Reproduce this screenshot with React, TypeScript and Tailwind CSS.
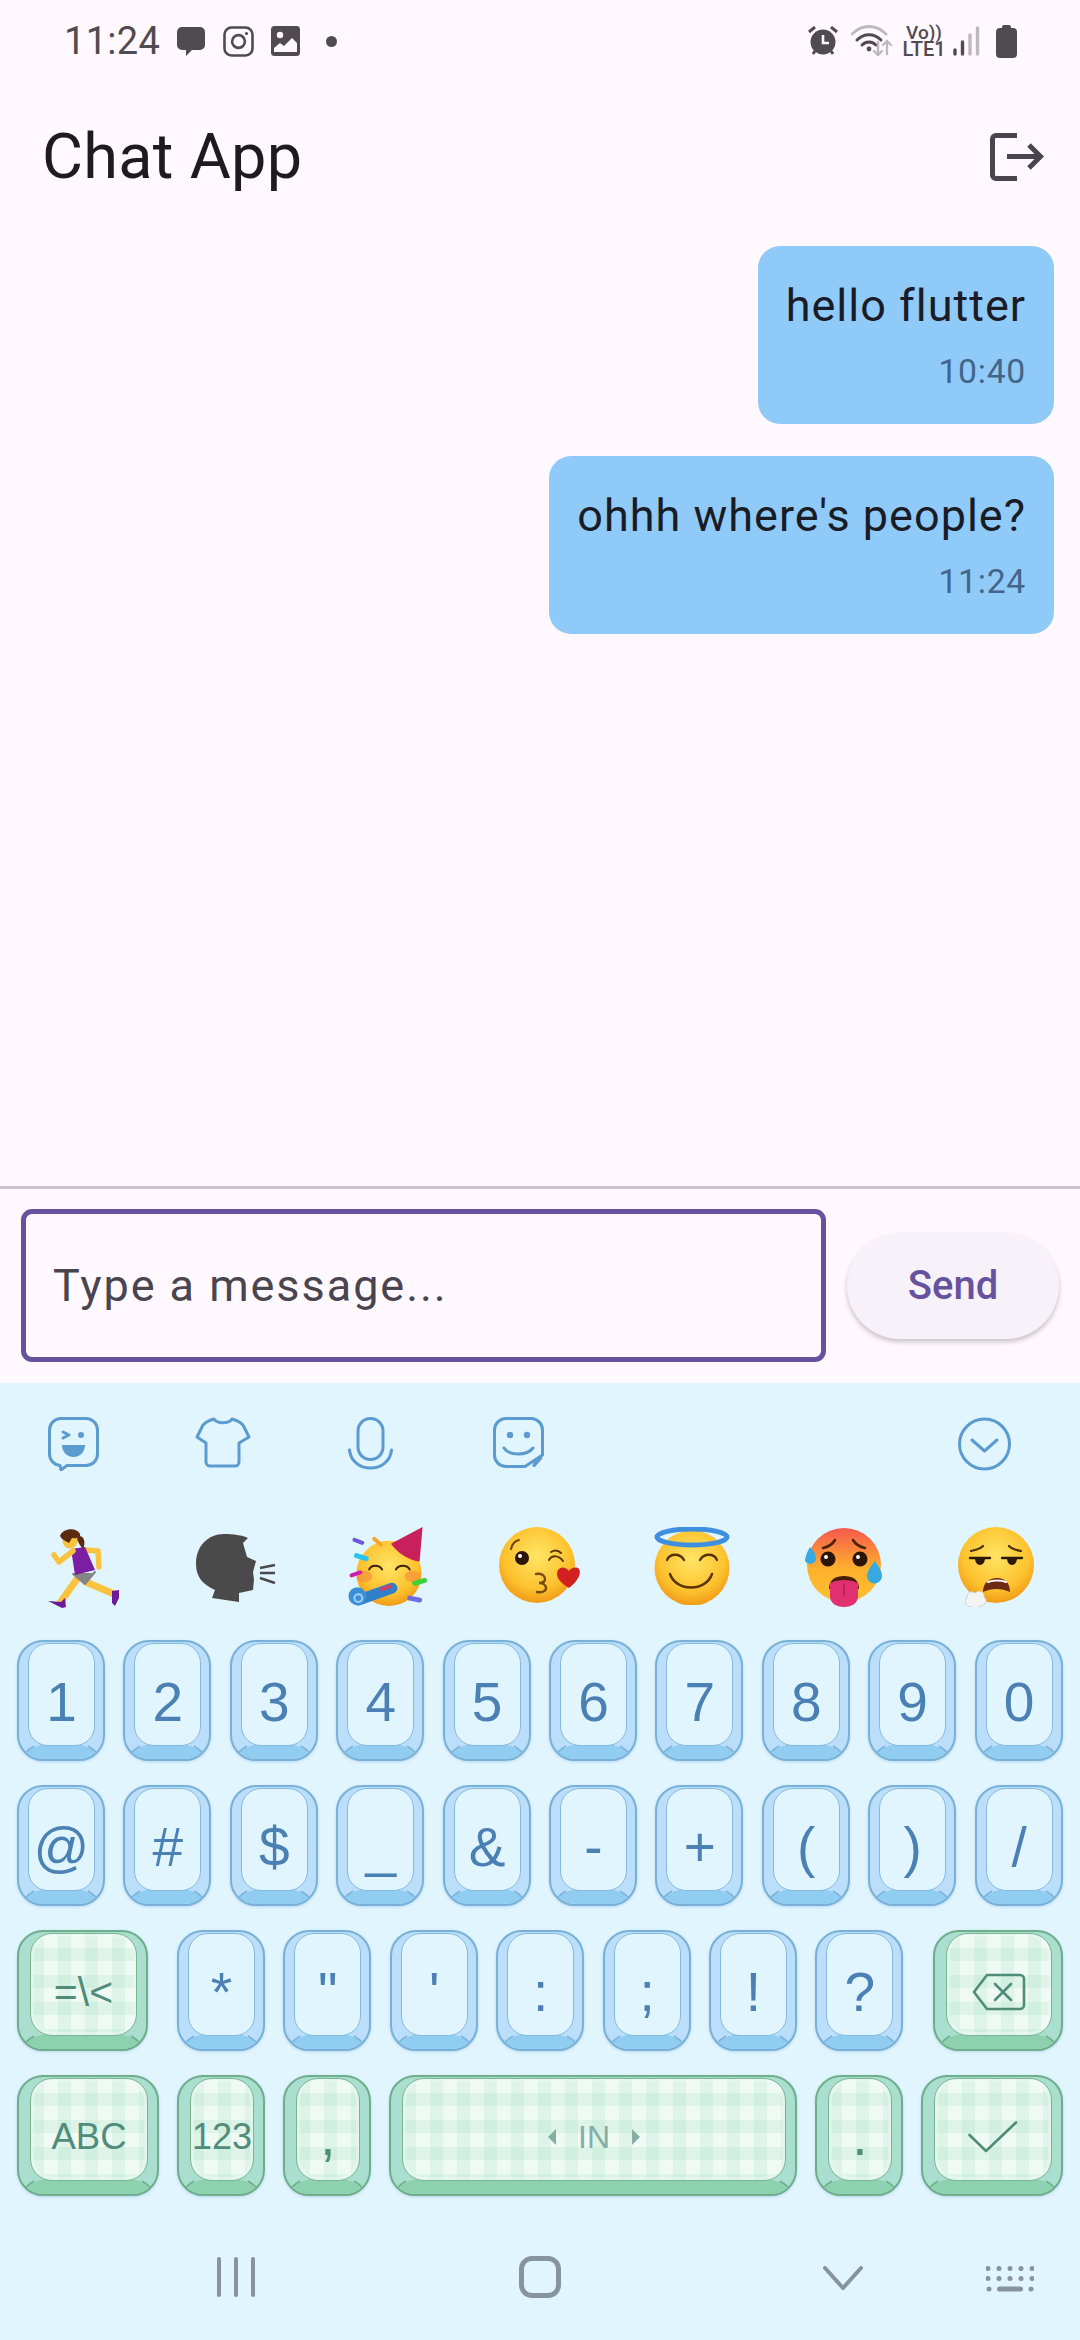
import type { ReactNode } from 'react'

const ICON = '#4f4b50'
const KB_STROKE = '#5b9bd0'
const GREEN_TEXT = '#4f8c7a'

/* ---------- status bar ---------- */

function StatusBar() {
  return (
    <div className="flex h-[82px] items-center justify-between pl-[64px] pr-[63px]">
      <div className="flex items-center">
        <span className="text-[38px] leading-[44px] tracking-[0.3px] text-[#4f4b50]">11:24</span>
        <svg viewBox="0 0 30 31" className="ml-[16px] h-[31px] w-[30px]">
          <path d="M6 1h18a5 5 0 0 1 5 5v13a5 5 0 0 1-5 5H16l-6 6v-6H6a5 5 0 0 1-5-5V6a5 5 0 0 1 5-5z" fill={ICON} />
        </svg>
        <svg viewBox="0 0 31 31" className="ml-[17px] h-[31px] w-[31px]" fill="none" stroke={ICON} strokeWidth="2.6">
          <rect x="1.5" y="1.5" width="28" height="28" rx="7" />
          <circle cx="15.5" cy="15.5" r="6.4" />
          <circle cx="23.5" cy="7.5" r="1.6" fill={ICON} stroke="none" />
        </svg>
        <svg viewBox="0 0 29 30" className="ml-[17px] h-[30px] w-[29px]">
          <rect x="0" y="0" width="29" height="30" rx="3.5" fill={ICON} />
          <circle cx="9" cy="9" r="3.2" fill="#fff8fe" />
          <path d="M3 26v-4l6-5 4 3 8-8 5 5v9z" fill="#fff8fe" />
        </svg>
        <div className="ml-[26px] h-[11px] w-[11px] rounded-full bg-[#4f4b50]" />
      </div>
      <div className="flex items-center">
        <svg viewBox="0 0 30 30" className="h-[30px] w-[30px]" fill={ICON}>
          <circle cx="15" cy="16" r="12.5" />
          <path d="M1 6l6-5M29 6l-6-5M5 28l2-3M25 28l-2-3" stroke={ICON} strokeWidth="3" />
          <path d="M15 9v8h6" stroke="#fff8fe" strokeWidth="2.6" fill="none" />
        </svg>
        <svg viewBox="0 0 42 32" className="ml-[13px] h-[32px] w-[42px]" fill="none" strokeLinecap="round">
          <path d="M1 9C11-1 25-1 35 9" stroke="#bdbabd" strokeWidth="3" />
          <path d="M6 15c7-7 17-7 24 0M11 20c4-4 10-4 14 0" stroke={ICON} strokeWidth="3" />
          <circle cx="18" cy="24" r="2.4" fill={ICON} />
          <path d="M27 17v13m-4-4l4 4 4-4" stroke="#bdbabd" strokeWidth="2.4" />
          <path d="M36 29V16m-4 4l4-4 4 4" stroke="#bdbabd" strokeWidth="2.4" />
        </svg>
        <div className="ml-[12px] flex w-[38px] flex-col items-center text-[#4f4b50]">
          <span className="text-[19px] font-medium leading-[17px]">Vo))</span>
          <span className="text-[20px] font-medium leading-[17px]">LTE1</span>
        </div>
        <svg viewBox="0 0 27 30" className="ml-[10px] h-[30px] w-[27px]" fill="none" strokeLinecap="round" strokeWidth="3.4">
          <path d="M2 28v-4" stroke={ICON} />
          <path d="M9.500 28v-12" stroke={ICON} />
          <path d="M17 28V9" stroke="#bdbabd" />
          <path d="M24.500 28V2" stroke="#bdbabd" />
        </svg>
        <svg viewBox="0 0 21 33" className="ml-[16px] h-[33px] w-[21px]">
          <path d="M6 3V2a2 2 0 0 1 2-2h5a2 2 0 0 1 2 2v1h2a4 4 0 0 1 4 4v22a4 4 0 0 1-4 4H4a4 4 0 0 1-4-4V7a4 4 0 0 1 4-4z" fill={ICON} />
        </svg>
      </div>
    </div>
  )
}

/* ---------- chat ---------- */

function Bubble({ text, time }: { text: string; time: string }) {
  return (
    <div className="self-end rounded-[22px] bg-[#90caf9] px-[28px] pb-[32px] pt-[33px]">
      <p className="text-[45px] leading-[53px] tracking-[1px] text-[#1a1c25]">{text}</p>
      <p className="mt-[20px] text-right text-[33.75px] leading-[40px] tracking-[0.7px] text-[#44658a]">{time}</p>
    </div>
  )
}

function ChatPane() {
  return (
    <div className="flex flex-1 flex-col">
      <div className="flex h-[150px] items-center justify-between pl-[42px] pr-[36px]">
        <h1 className="text-[63px] font-normal leading-[74px] tracking-[0.3px] text-[#1d1b20]">Chat App</h1>
        <svg viewBox="0 0 54 48" className="h-[48px] w-[54px]" fill="none" stroke="#49454f" strokeWidth="5">
          <path d="M27 2.500H6a3.500 3.500 0 0 0-3.500 3.500v36A3.500 3.500 0 0 0 6 45.500h21" />
          <path d="M17 23.500h33M39 12l11.500 11.500L39 35" />
        </svg>
      </div>
      <div className="flex flex-col gap-[32px] pr-[26px] pt-[14px]">
        <Bubble text="hello flutter" time="10:40" />
        <Bubble text="ohhh where's people?" time="11:24" />
      </div>
    </div>
  )
}

function Composer() {
  return (
    <div className="h-[197px] border-t-[3px] border-[#cac4d0] pl-[21px] pr-[21px] pt-[20px]">
      <div className="flex items-center">
        <div className="flex h-[153px] w-[805px] items-center rounded-[11px] border-[5px] border-[#67529d] pl-[27px]">
          <span className="text-[45px] leading-[53px] tracking-[1.95px] text-[#49454f]">Type a message...</span>
        </div>
        <div className="ml-[21px] flex h-[106px] w-[212px] items-center justify-center rounded-[53px] bg-[#f7f2fa] shadow-[0_3px_5px_rgba(0,0,0,0.22)]">
          <span className="text-[40px] font-medium leading-[47px] text-[#67529d]">Send</span>
        </div>
      </div>
    </div>
  )
}

/* ---------- keyboard toolbar ---------- */

function Toolbar() {
  const common = { fill: 'none', stroke: KB_STROKE, strokeWidth: 3, strokeLinecap: 'round' as const, strokeLinejoin: 'round' as const }
  return (
    <div className="flex h-[53px] items-start pl-[48px]">
      <svg viewBox="0 0 51 54" className="h-[54px] w-[51px]" {...common}>
        <path d="M13 1.500h25A11.500 11.500 0 0 1 49.500 13v24A11.500 11.500 0 0 1 38 48.500H19L13 53l-1-4.500A11.500 11.500 0 0 1 1.500 37V13A11.500 11.500 0 0 1 13 1.500z" />
        <path d="M15 15l6 3-6 3" />
        <circle cx="33" cy="18" r="3" fill={KB_STROKE} stroke="none" />
        <path d="M14 28h23c0 7-5 12-11.500 12S14 35 14 28z" fill={KB_STROKE} stroke="none" />
      </svg>
      <svg viewBox="0 0 56 51" className="ml-[96px] h-[51px] w-[56px]" {...common}>
        <path d="M19 2c3 5 15 5 18 0 4 1 8 3 11 6l6 12-10 6v19a4 4 0 0 1-4 4H15a4 4 0 0 1-4-4V26L2 20 8 8c3-3 7-5 11-6z" />
      </svg>
      <svg viewBox="0 0 45 53" className="ml-[97px] h-[53px] w-[45px]" {...common}>
        <rect x="10" y="1.500" width="25" height="41" rx="12.500" />
        <path d="M1.500 33c1 11 10 18 21 18s20-7 21-18" />
      </svg>
      <svg viewBox="0 0 51 51" className="ml-[100px] h-[51px] w-[51px]" {...common}>
        <path d="M32 49.500H13A11.500 11.500 0 0 1 1.500 38V13A11.500 11.500 0 0 1 13 1.500h25A11.500 11.500 0 0 1 49.500 13v25z" />
        <path d="M39 49.500c1-4 5-10 10.500-11.500L49 42l-7 8z" fill={KB_STROKE} stroke="none" />
        <circle cx="17" cy="18" r="3.200" fill={KB_STROKE} stroke="none" />
        <circle cx="34" cy="18" r="3.200" fill={KB_STROKE} stroke="none" />
        <path d="M11 31c5 8 23 8 29 0" />
      </svg>
      <svg viewBox="0 0 53 54" className="ml-[414px] h-[54px] w-[53px]" {...common}>
        <circle cx="26.500" cy="27" r="25" />
        <path d="M14 23l12.500 11L39 23" />
      </svg>
    </div>
  )
}

/* ---------- emoji suggestions, drawn by hand ---------- */

function FaceDefs({ id }: { id: string }) {
  return (
    <defs>
      <radialGradient id={id} cx="50%" cy="38%" r="62%">
        <stop offset="0%" stopColor="#ffe566" />
        <stop offset="70%" stopColor="#fdc22e" />
        <stop offset="100%" stopColor="#f19a17" />
      </radialGradient>
    </defs>
  )
}

function Runner() {
  return (
    <svg viewBox="0 0 72 82" className="h-[82px] w-[72px]" fill="none" strokeLinecap="round" strokeLinejoin="round">
      <path d="M38 23l12 1 1 16" stroke="#f9c33f" strokeWidth="5.500" />
      <path d="M38 55l28 12" stroke="#f9c33f" strokeWidth="7" />
      <path d="M29 52L12 76" stroke="#f9c33f" strokeWidth="7" />
      <path d="M25 47h20l2-2-10 12z" fill="#858585" stroke="#858585" strokeWidth="2" />
      <path d="M23 22l14-2 10 23-20 5z" fill="#7b1fa2" />
      <path d="M25 24L11 35 6 28" stroke="#f9c33f" strokeWidth="5.500" />
      <circle cx="22" cy="14" r="7.500" fill="#f9c33f" />
      <path d="M12 9c2-7 16-10 20-2 1 3-3 5-8 4l-3 5c-3-2-7-3-9-7z" fill="#5b2a10" />
      <path d="M31 9c5 0 7 6 4 13-3-3-5-7-6-10z" fill="#5b2a10" />
      <path d="M0 74l13 1 4-4 1 9-4 1z" fill="#6a1b9a" />
      <path d="M64 64l7-1 0 8-4 8-3-3z" fill="#6a1b9a" />
    </svg>
  )
}

function SpeakingHead() {
  return (
    <svg viewBox="0 0 80 68" className="mt-[7px] h-[68px] w-[80px]" fill="none">
      <path d="M28 0c9 0 18 1 24 4l-5 5 4 14 9 4-3 11 1 8-1 10-14 3v9L16 64l3-8C8 51 0 44 0 30 0 12 12 0 28 0z" fill="#4a4a4a" />
      <path d="M64 34l15-3M64 39h15M64 44l15 5" stroke="#4a4a4a" strokeWidth="2.500" />
    </svg>
  )
}

function Party() {
  return (
    <svg viewBox="0 0 84 82" className="h-[81px] w-[84px]" fill="none" strokeLinecap="round">
      <FaceDefs id="pf" />
      <circle cx="43" cy="47" r="33" fill="url(#pf)" />
      <ellipse cx="18" cy="50" rx="8" ry="6" fill="#f58a3c" opacity=".6" />
      <ellipse cx="67" cy="50" rx="8" ry="6" fill="#f58a3c" opacity=".6" />
      <path d="M45 17L77 0l-3 35c-10-1-22-8-29-18z" fill="#c8205a" />
      <path d="M23 43c2-5 10-5 13 0M50 43c3-5 11-5 14 0" stroke="#3a2208" strokeWidth="2" />
      <path d="M46 62L12 74" stroke="#2f7fc9" strokeWidth="11" />
      <path d="M44 60l-8 3" stroke="#d33c63" strokeWidth="4" />
      <circle cx="11" cy="70" r="9" fill="#3d8fd9" />
      <circle cx="12" cy="72" r="4" fill="none" stroke="#9fd0f5" strokeWidth="2" />
      <path d="M8 13l8 3" stroke="#6d57e0" strokeWidth="4" />
      <path d="M28 12l7 6" stroke="#f5a623" strokeWidth="4" />
      <path d="M10 29l10 3" stroke="#28c4ee" strokeWidth="5" />
      <path d="M5 49l9-3" stroke="#c81fb0" strokeWidth="4" />
      <path d="M69 57l10-3" stroke="#3ad23a" strokeWidth="5" />
      <path d="M64 72l10 2" stroke="#6d6ce0" strokeWidth="5" />
    </svg>
  )
}

function Kiss() {
  return (
    <svg viewBox="0 0 82 77" className="h-[77px] w-[82px]" fill="none" strokeLinecap="round">
      <FaceDefs id="kf" />
      <circle cx="38" cy="38" r="38" fill="url(#kf)" />
      <circle cx="23" cy="31" r="7" fill="#2a1506" />
      <circle cx="21" cy="29" r="2" fill="#fff" />
      <path d="M12 22c1-5 4-8 8-9" stroke="#6b3f10" strokeWidth="2" />
      <path d="M50 33c3-5 10-5 14 1M52 25c3-2 7-2 10 1" stroke="#5a3308" strokeWidth="2" />
      <path d="M37 47c6-1 9 2 9 5s-3 4-6 4c4 0 7 2 7 5s-4 5-9 4" stroke="#7a4a12" strokeWidth="2.400" />
      <path d="M70 61C60 55 56 49 59 43c3-4 8-3 11 1 2-3 7-5 10-2 3 5-2 13-10 19z" fill="#d32020" />
    </svg>
  )
}

function Halo() {
  return (
    <svg viewBox="0 0 76 78" className="h-[78px] w-[76px]" fill="none" strokeLinecap="round">
      <FaceDefs id="hf" />
      <circle cx="38" cy="41" r="37.500" fill="url(#hf)" />
      <ellipse cx="38" cy="10" rx="35" ry="8" stroke="#3f8fe0" strokeWidth="5" />
      <path d="M13 33c3-7 13-7 17 0M46 33c4-7 14-7 17 0" stroke="#5a3308" strokeWidth="2.400" />
      <path d="M16 47c6 18 36 18 42 0" stroke="#5a3308" strokeWidth="2.400" />
    </svg>
  )
}

function HotFace() {
  return (
    <svg viewBox="0 0 78 80" className="h-[80px] w-[78px]" fill="none" strokeLinecap="round">
      <defs>
        <linearGradient id="hot" x1="0" y1="0" x2="0" y2="1">
          <stop offset="0%" stopColor="#f7584d" />
          <stop offset="55%" stopColor="#fdb02e" />
          <stop offset="100%" stopColor="#fdc22e" />
        </linearGradient>
      </defs>
      <circle cx="39" cy="38" r="37" fill="url(#hot)" />
      <path d="M18 21c5-1 9-3 12-8M60 21c-5-1-9-3-12-8" stroke="#4a2208" strokeWidth="2.600" />
      <circle cx="23" cy="32" r="7.500" fill="#2a1506" />
      <circle cx="55" cy="32" r="7.500" fill="#2a1506" />
      <circle cx="21" cy="30" r="2" fill="#fff" />
      <circle cx="53" cy="30" r="2" fill="#fff" />
      <path d="M24 62c0-10 7-13 15-13s15 3 15 13z" fill="#4a1f08" />
      <path d="M25 56c8-4 20-4 28 0v13c0 7-6 11-14 11s-14-4-14-11z" fill="#e0306f" />
      <path d="M39 57v12" stroke="#b01f52" strokeWidth="1.500" />
      <path d="M5 20c4 4 6 8 6 12a6 6 0 0 1-11 2c0-4 2-9 5-14z" fill="#35a9e0" />
      <path d="M70 34c4 6 7 10 7 15a7.500 7.500 0 0 1-15 0c0-5 4-10 8-15z" fill="#35a9e0" />
    </svg>
  )
}

function Exhale() {
  return (
    <svg viewBox="0 0 76 80" className="h-[80px] w-[76px]" fill="none" strokeLinecap="round">
      <FaceDefs id="ef" />
      <circle cx="38" cy="38" r="38" fill="url(#ef)" />
      <path d="M13 24c5-1 9-2 12-5M63 24c-5-1-9-2-12-5" stroke="#4a2f08" strokeWidth="2.200" />
      <path d="M12 31h20" stroke="#2a1a06" strokeWidth="2.400" />
      <path d="M44 31h20" stroke="#2a1a06" strokeWidth="2.400" />
      <path d="M17 31h10c0 4-2 7-5 7s-5-3-5-7zM49 31h10c0 4-2 7-5 7s-5-3-5-7z" fill="#2a1a06" />
      <path d="M25 65c0-9 6-14 14-14s13 5 13 14c-8-4-19-4-27 0z" fill="#6e2a12" />
      <path d="M30 55c5-2 13-2 18 0" stroke="#fff" strokeWidth="2" />
      <path d="M13 80c-6 0-7-7-4-9-1-5 4-8 8-5 4-4 10-1 9 4 4 2 2 8-2 8-2 2-7 4-11 2z" fill="#f4f4f4" stroke="#c8c8c8" strokeWidth=".800" />
    </svg>
  )
}

function EmojiRow() {
  return (
    <div className="mt-[57px] grid h-[81px] grid-cols-7 px-[8px]">
      {[<Runner key="a" />, <SpeakingHead key="b" />, <Party key="c" />, <Kiss key="d" />, <Halo key="e" />, <HotFace key="f" />, <Exhale key="g" />].map((emoji, i) => (
        <div key={i} className="flex items-start justify-center">
          {emoji}
        </div>
      ))}
    </div>
  )
}

/* ---------- keys ---------- */

const WIDTHS: Record<number, string> = {
  88: 'w-[88px]',
  130: 'w-[130px]',
  131: 'w-[131px]',
  142: 'w-[142px]',
  408: 'w-[408px]',
}

function Key({ w = 88, green = false, className = '', children }: { w?: number; green?: boolean; className?: string; children?: ReactNode }) {
  const W = w - 4
  const face = green ? '#8ed1b0' : '#90cdf0'
  const edge = green ? '#6fae8b' : '#7db3da'
  return (
    <div
      className={`relative flex h-[121px] shrink-0 overflow-hidden rounded-[26px] border-2 pb-[13px] pt-[1px] shadow-[0_1px_3px_rgba(90,150,200,0.3)] ${WIDTHS[w]} ${
        green ? 'border-[#6fae8b] bg-[#aadfd0] pl-[11px] pr-[9px]' : 'border-[#78b0d8] bg-[#bbdffa] pl-[9px] pr-[8px]'
      } ${className}`}
    >
      <svg viewBox={`0 0 ${W} 117`} width={W} height={117} className="absolute left-0 top-0">
        <path d={`M6 111Q15 103 28 102H${W - 28}Q${W - 15} 103 ${W - 6} 111Q${W - 3} 117 ${W} 117H0Q3 117 6 111Z`} fill={face} />
        <path d={`M6 111Q10 107 15 104M${W - 6} 111Q${W - 10} 107 ${W - 15} 104`} stroke={edge} strokeWidth="1.500" fill="none" />
      </svg>
      {green ? (
        <div className="relative flex flex-1 items-center justify-center rounded-[22px] border-[1.5px] border-[#79b493] bg-[#f0faf5] bg-[linear-gradient(90deg,rgba(170,225,195,0.25)_50%,transparent_50%),linear-gradient(0deg,rgba(170,225,195,0.25)_50%,transparent_50%)] bg-[size:27px_27px] pt-[14px] shadow-[inset_0_0_0_3px_rgba(240,250,245,0.45)]">
          {children}
        </div>
      ) : (
        <div className="relative flex flex-1 items-center justify-center rounded-[20px] border-[1.5px] border-[#85b9dd] bg-[#e1f5fe] pt-[16px]">
          {children}
        </div>
      )}
    </div>
  )
}

function BlueKey({ label }: { label: string }) {
  return (
    <Key>
      <span className="text-[55px] leading-[63px] text-[#4a80b4]">{label}</span>
    </Key>
  )
}

function Keyboard() {
  const labelClass = 'leading-[42px]'
  return (
    <div className="flex flex-col gap-[24px] px-[17px] pt-[32px] font-['Liberation_Sans',sans-serif]">
      <div className="flex gap-[18.4px]">
        {['1', '2', '3', '4', '5', '6', '7', '8', '9', '0'].map((k) => (
          <BlueKey key={k} label={k} />
        ))}
      </div>
      <div className="flex gap-[18.4px]">
        {['@', '#', '$', '_', '&', '-', '+', '(', ')', '/'].map((k) => (
          <BlueKey key={k} label={k} />
        ))}
      </div>
      <div className="flex gap-[18.4px]">
        <Key w={131} green className="mr-[10.6px]">
          <span className={`text-[41px] text-[#4f8c7a] ${labelClass}`}>=\&lt;</span>
        </Key>
        {['*', '"', "'", ':', ';', '!', '?'].map((k) => (
          <BlueKey key={k} label={k} />
        ))}
        <Key w={130} green className="ml-[11px]">
          <svg viewBox="0 0 54 38" className="h-[38px] w-[54px]" fill="none" stroke={GREEN_TEXT} strokeWidth="2.600" strokeLinecap="round" strokeLinejoin="round">
            <path d="M15 2h33a4 4 0 0 1 4 4v26a4 4 0 0 1-4 4H15L2 19z" />
            <path d="M23 11l16 16M39 11L23 27" />
          </svg>
        </Key>
      </div>
      <div className="flex gap-[18px]">
        <Key w={142} green>
          <span className={`text-[36.5px] text-[#4f8c7a] ${labelClass}`}>ABC</span>
        </Key>
        <Key green>
          <span className={`text-[36px] text-[#4f8c7a] ${labelClass}`}>123</span>
        </Key>
        <Key green>
          <span className="text-[55px] leading-[63px] text-[#4f8c7a]">,</span>
        </Key>
        <Key w={408} green>
          <svg viewBox="0 0 8 16" className="h-[16px] w-[8px]">
            <path d="M8 0v16L0 8z" fill="#86aea4" />
          </svg>
          <span className="mx-[22px] text-[32px] leading-[40px] text-[#86aea4]">IN</span>
          <svg viewBox="0 0 8 16" className="h-[16px] w-[8px]">
            <path d="M0 0v16l8-8z" fill="#86aea4" />
          </svg>
        </Key>
        <Key green>
          <span className="text-[55px] leading-[63px] text-[#4f8c7a]">.</span>
        </Key>
        <Key w={142} green>
          <svg viewBox="0 0 50 32" className="h-[32px] w-[50px]" fill="none" stroke={GREEN_TEXT} strokeWidth="2.600" strokeLinecap="round" strokeLinejoin="round">
            <path d="M1.500 14L18 30 48 1.500" />
          </svg>
        </Key>
      </div>
    </div>
  )
}

function NavBar() {
  return (
    <div className="mt-[60px] flex h-[42px] items-start pl-[217px]">
      <div className="flex gap-[13px] pt-[1px]">
        <div className="h-[40px] w-[4px] rounded-full bg-[#87949b]" />
        <div className="h-[40px] w-[4px] rounded-full bg-[#87949b]" />
        <div className="h-[40px] w-[4px] rounded-full bg-[#87949b]" />
      </div>
      <div className="ml-[264px] h-[42px] w-[42px] rounded-[13px] border-[5px] border-[#87949b]" />
      <svg viewBox="0 0 40 24" className="ml-[262px] mt-[10px] h-[24px] w-[40px]" fill="none" stroke="#87949b" strokeWidth="4" strokeLinecap="round">
        <path d="M2 2l18 20L38 2" />
      </svg>
      <svg viewBox="0 0 48 26" className="ml-[123px] mt-[10px] h-[26px] w-[48px]" fill="#87949b">
        {[0, 11, 22, 33, 44].map((x) => (
          <circle key={x} cx={x + 2} cy="2.500" r="2.500" />
        ))}
        {[0, 11, 22, 33, 44].map((x) => (
          <circle key={x} cx={x + 2} cy="12.500" r="2.500" />
        ))}
        <circle cx="3" cy="23" r="2.500" />
        <rect x="11" y="20.500" width="26" height="5" rx="2.500" />
        <circle cx="45" cy="23" r="2.500" />
      </svg>
    </div>
  )
}

export default function App() {
  return (
    <div className="flex h-[2340px] w-[1080px] flex-col overflow-hidden bg-[#fff8fe] font-['Roboto',sans-serif]">
      <StatusBar />
      <ChatPane />
      <Composer />
      <div className="h-[957px] bg-[#e1f5fe] pt-[34px]">
        <Toolbar />
        <EmojiRow />
        <Keyboard />
        <NavBar />
      </div>
    </div>
  )
}
